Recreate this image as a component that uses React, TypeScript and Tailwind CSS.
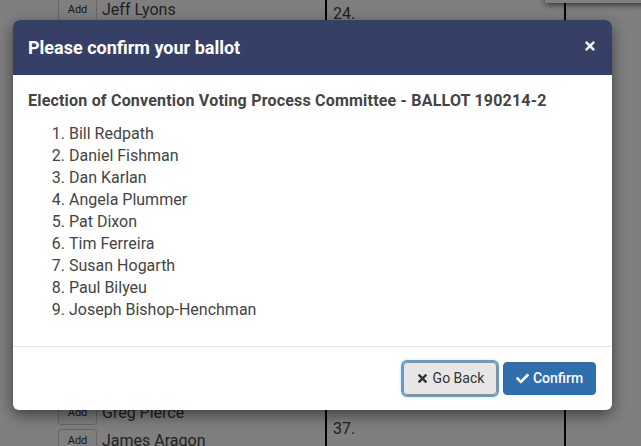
import React from "react";
import { FaTimes, FaCheck } from "react-icons/fa";

const font = { fontFamily: "Roboto, 'Liberation Sans', sans-serif" };

function BgRow({ name }: { name: string }) {
  return (
    <div className="flex items-center h-[28px]">
      <div className="w-[58px]" />
      <div className="w-[39px] h-[24px] border border-[#ccc] rounded-[3px] flex items-center justify-center text-[11px] text-[#333] bg-white">
        Add
      </div>
      <div className="ml-[5px] text-[16px] text-[#444]">{name}</div>
    </div>
  );
}

export default function App() {
  const names = [
    "Bill Redpath",
    "Daniel Fishman",
    "Dan Karlan",
    "Angela Plummer",
    "Pat Dixon",
    "Tim Ferreira",
    "Susan Hogarth",
    "Paul Bilyeu",
    "Joseph Bishop-Henchman",
  ];
  return (
    <div className="relative w-[641px] h-[446px] overflow-hidden bg-white" style={font}>
      {/* background page */}
      <div className="flex h-full">
        <div className="w-[325px] flex flex-col">
          <div className="mt-[-4px]">
            <BgRow name="Jeff Lyons" />
          </div>
          <div className="flex-1" />
          <div className="mb-[-9px]">
            <BgRow name="Greg Pierce" />
            <BgRow name="James Aragon" />
          </div>
        </div>
        <div className="w-[241px] border-l-2 border-r-2 border-black flex flex-col pl-[6px]">
          <div className="text-[16px] text-[#444] mt-[2px]">24.</div>
          <div className="flex-1" />
          <div className="text-[16px] text-[#444] mb-[5px]">37.</div>
        </div>
      </div>
      <div className="absolute top-[-8px] left-[545px] w-[110px] h-[11px] bg-white shadow-[0_2px_6px_rgba(0,0,0,0.6)]" />

      {/* overlay */}
      <div className="absolute inset-0 bg-black/50" />

      {/* modal */}
      <div className="absolute left-[13px] top-[20px] w-[599px] rounded-[6px] bg-white overflow-hidden shadow-[0_5px_15px_rgba(0,0,0,0.5)] flex flex-col">
        <div className="h-[55px] bg-[#363f66] flex items-center justify-between px-[15px]">
          <div className="text-white font-bold text-[18px]">Please confirm your ballot</div>
          <FaTimes className="text-[#eeeeee] w-[14px] h-[14px] mb-[4px]" />
        </div>
        <div className="px-[15px] pt-[16px] pb-[25px] text-[#444]">
          <div className="font-bold text-[16px] tracking-[0.2px] leading-[20px]">
            Election of Convention Voting Process Committee - BALLOT 190214-2
          </div>
          <ol className="list-decimal pl-[41px] mt-[12px] text-[16px] leading-[22px]">
            {names.map((n) => (
              <li key={n}>{n}</li>
            ))}
          </ol>
        </div>
        <div className="border-t border-[#e5e5e5] pt-[15px] pb-[15px] pr-[16px] flex justify-end gap-[6px]">
          <button className="w-[94px] h-[33px] rounded-[4px] bg-[#e6e6e6] border border-[#8c8c8c] text-[#333] text-[14px] flex items-center justify-center gap-[4px] outline-2 outline-[#5e9ed6] outline-offset-0 shadow-[0_0_4px_#66afe9]">
            <FaTimes className="w-[13px] h-[13px]" />
            <span>Go Back</span>
          </button>
          <button className="w-[93px] h-[33px] rounded-[4px] bg-[#2f6fae] border border-[#2e6da4] text-white text-[14px] font-medium flex items-center justify-center gap-[4px]">
            <FaCheck className="w-[13px] h-[13px]" />
            <span>Confirm</span>
          </button>
        </div>
      </div>
    </div>
  );
}
